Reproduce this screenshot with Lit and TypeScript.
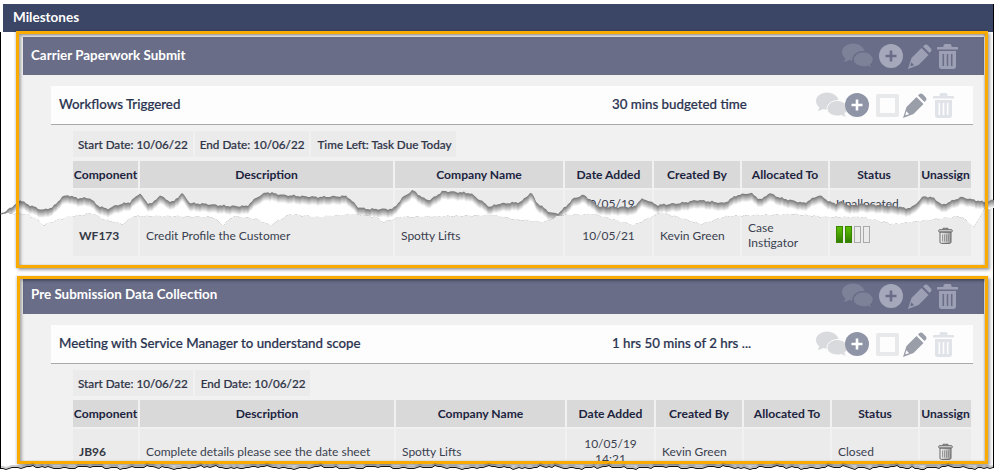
import { LitElement, html, css, svg } from "lit";
import { customElement } from "lit/decorators.js";

const U: number[][] = [
  [0,214],[6,212],[8,208],[13,207],[20,200],[27,204],[37,208],[43,210],[53,207],[62,197],[68,195],[77,198],[90,198],[97,205],[107,209],[117,205],[130,202],[140,193],[147,203],[153,203],[160,195],[167,200],[173,202],[182,193],[190,203],[207,204],[227,206],[247,206],[257,197],[267,192],[283,195],[317,197],[347,196],[358,207],[367,209],[393,209],[403,197],[413,190],[423,198],[430,200],[443,191],[470,193],[483,202],[490,207],[497,204],[507,203],[521,202],[531,192],[537,203],[551,213],[559,213],[574,198],[584,195],[592,201],[600,207],[634,207],[641,199],[647,200],[657,205],[681,203],[697,200],[724,203],[737,195],[751,193],[761,200],[769,193],[781,198],[804,203],[819,195],[827,200],[835,204],[841,201],[850,206],[861,204],[894,206],[905,208],[911,208],[924,196],[934,198],[942,205],[961,197],[984,202],[994,200]
];
const L: number[][] = [
  [0,214],[7,213],[27,214],[37,219],[43,225],[60,219],[73,216],[93,213],[103,219],[123,224],[133,216],[167,216],[213,217],[223,225],[233,216],[257,219],[270,225],[290,214],[317,217],[353,214],[377,217],[383,222],[400,217],[494,215],[514,219],[544,222],[560,215],[594,214],[634,225],[661,212],[701,224],[727,216],[794,214],[827,217],[861,217],[894,224],[961,216],[974,227],[984,209],[994,208]
];

const interp = (pts: number[][], x: number) => {
  for (let i = 1; i < pts.length; i++) {
    if (x <= pts[i][0]) {
      const [a, b] = pts[i - 1];
      const [c, d] = pts[i];
      return b + ((d - b) * (x - a)) / (c - a || 1);
    }
  }
  return pts[pts.length - 1][1];
};
const jitter = (x: number, s: number) => Math.sin(x * 1.7 + s) * 0.5 + Math.sin(x * 0.63 + s * 2) * 0.6;

const tearLayers = () => {
  const xs: number[] = [];
  for (let x = 0; x <= 994; x += 2) xs.push(x);
  const steps = 9;
  const out = [];
  for (let i = 0; i < steps; i++) {
    const t = i / (steps - 1);
    const g = Math.round(125 + (255 - 125) * t);
    const top = xs.map((x) => {
      const l = interp(L, x) + jitter(x, 3);
      const u = interp(U, x) + jitter(x, 1) + i;
      return `${x},${Math.min(u, l).toFixed(1)}`;
    });
    const bot = [...xs].reverse().map((x) => `${x},${(interp(L, x) + jitter(x, 3)).toFixed(1)}`);
    out.push(svg`<polygon points=${[...top, ...bot].join(" ")} fill=${`rgb(${g},${g},${g})`}></polygon>`);
  }
  return out;
};

const bottomEdge = () => {
  const pts: string[] = [];
  for (let x = 0; x <= 994; x += 3) {
    const y = 467.5 + Math.round(Math.sin(x * 0.37) * 0.8 + Math.sin(x * 0.11 + 1) * 0.9 + Math.sin(x * 0.83 + 2) * 0.5);
    pts.push(`${x},${y}`);
  }
  return pts.join(" ");
};

const bubbles = html`<svg class="ic bubbles" width="32" height="26" viewBox="0 0 32 26">
  <path class="b1" d="M11 .5c6 0 11.500 3.700 11.500 8.500s-5.500 8.500-11.500 8.500c-1.500 0-3-.2-4-.6C5.500 18 3.500 18.700 1.500 18.700c1-1 1.500-2 1.800-3.500C1.200 13.700 0 11.500 0 9 0 4.200 5 .5 11 .5z"></path>
  <path class="b2" d="M21 8.500c5.500 0 10.500 3.500 10.500 8 0 2-1 3.900-2.700 5.200.2 1.300.9 2.600 1.900 3.500-1.800 0-3.600-.7-4.900-1.800-1.300.4-2.800.6-4.300.6-5.500 0-10.500-3-10.500-7.500s5-8 10.500-8z"></path>
</svg>`;
const plus = html`<svg class="ic plus" width="24" height="24" viewBox="0 0 24 24">
  <circle class="c" cx="12" cy="12" r="12"></circle>
  <path class="p" d="M10.700 6.500h2.600v4.200h4.200v2.600h-4.200v4.200h-2.600v-4.200H6.500v-2.600h4.200z"></path>
</svg>`;
const pencil = html`<svg class="ic pencil" width="24" height="25" viewBox="0 0 24 25">
  <path fill-rule="evenodd" d="M3.500 14 13.500 4l7 7-10 10L0 25zM3.300 18.300l-1 3.900 3.900-1z"></path>
  <path d="M15 2.500l1.200-1.200c1-1 2.600-1 3.600 0l2.900 2.900c1 1 1 2.600 0 3.600L21.500 9z"></path>
</svg>`;
const trash = html`<svg class="ic trash" width="21" height="25" viewBox="0 0 21 25">
  <path d="M6.500 3V1.800C6.500.8 7.300 0 8.300 0h4.400c1 0 1.800.8 1.800 1.800V3H20c.6 0 1 .4 1 1v1.500H0V4c0-.6.4-1 1-1z"></path>
  <path fill-rule="evenodd" d="M2 7h17v15.500c0 1.400-1.100 2.500-2.500 2.500h-12C3.100 25 2 23.900 2 22.500zM5.500 10v12h1.600V10zM9.700 10v12h1.600V10zM13.900 10v12h1.600V10z"></path>
</svg>`;
const rowTrash = html`<svg width="15" height="17" viewBox="0 0 15 17">
  <defs><linearGradient id="tg" x1="0" y1="0" x2="1" y2="0"><stop offset="0" stop-color="#f4f4f4"></stop><stop offset="1" stop-color="#9a9a9a"></stop></linearGradient></defs>
  <path d="M5 2.500V1.300h5v1.200" fill="none" stroke="#666"></path>
  <rect x=".7" y="2.700" width="13.600" height="2.300" rx="1" fill="#ddd" stroke="#666"></rect>
  <path d="M2 5.200h11v9.800c0 .8-.6 1.400-1.400 1.400H3.400C2.600 16.400 2 15.800 2 15z" fill="url(#tg)" stroke="#666"></path>
  <path d="M4.500 7.500v7M6.500 7.500v7M8.500 7.500v7M10.500 7.500v7" stroke="#888" stroke-width=".8"></path>
</svg>`;

type Row = { h: string; cells: unknown[] };
type Section = {
  cls: string;
  title: string;
  task: string;
  time: string;
  chips: string[];
  cols: number[];
  rows: Row[];
};

const progress = html`<div class="prog"><i class="on"></i><i class="on"></i><i></i><i></i></div>`;
const HEAD = ["Component", "Description", "Company Name", "Date Added", "Created By", "Allocated To", "Status", "Unassign"];

const SECTIONS: Section[] = [
  {
    cls: "one",
    title: "Carrier Paperwork Submit",
    task: "Workflows Triggered",
    time: "30 mins budgeted time",
    chips: ["Start Date: 10/06/22", "End Date: 10/06/22", "Time Left: Task Due Today"],
    cols: [65, 253, 168, 87, 86, 86, 88, 51],
    rows: [
      { h: "cut", cells: ["", "", "", "10/05/19", "", "", "Unallocated", ""] },
      { h: "r42", cells: ["WF173", "Credit Profile the Customer", "Spotty Lifts", "10/05/21", "Kevin Green", html`Case<br />Instigator`, progress, rowTrash] },
    ],
  },
  {
    cls: "two",
    title: "Pre Submission Data Collection",
    task: "Meeting with Service Manager to understand scope",
    time: "1 hrs 50 mins of 2 hrs ...",
    chips: ["Start Date: 10/06/22", "End Date: 10/06/22"],
    cols: [65, 254, 169, 87, 86, 86, 86, 51],
    rows: [
      { h: "r44", cells: ["JB96", "Complete details please see the date sheet", "Spotty Lifts", html`10/05/19<br />14:21`, "Kevin Green", "", "Closed", rowTrash] },
    ],
  },
];

@customElement("app-root")
export class AppRoot extends LitElement {
  static styles = css`
    :host {
      display: block;
      position: relative;
      width: 994px;
      height: 474px;
      overflow: hidden;
      background: #fff;
      font-family: "Lato", "Liberation Sans", sans-serif;
      color: #3a3f4f;
      font-size: 12px;
    }
    .page {
      display: flex;
      flex-direction: column;
      padding: 4px 1px 0 3px;
    }
    .top {
      height: 28px;
      background: #3b4565;
      color: #fff;
      font-size: 13.500px;
      font-weight: 700;
      line-height: 27px;
      padding-left: 10px;
    }
    .sec {
      position: relative;
      background: #f1f1f1;
      box-sizing: border-box;
      box-shadow: 2px 2px 3px rgba(0, 0, 0, 0.35), -1px 0 2px rgba(0, 0, 0, 0.15);
    }
    .sec.one {
      margin: -1px 5px 0 13px;
      height: 237px;
      padding: 6px 4px 0 7px;
    }
    .sec.two {
      margin: 8px 5px 0 14px;
      height: 188px;
      padding: 3px 4px 0 6px;
      overflow: hidden;
    }
    .annot {
      position: absolute;
      inset: 0;
      border: 3px solid #f9ab00;
      box-shadow: inset 2px 2px 3px rgba(0, 0, 0, 0.3), inset -1px 0 2px rgba(0, 0, 0, 0.2);
      z-index: 3;
      pointer-events: none;
    }
    .head {
      display: flex;
      align-items: center;
      background: #696d88;
      color: #fff;
      font-weight: 700;
      font-size: 13.400px;
      padding: 0 26px 0 8px;
    }
    .one .head { height: 38px; }
    .two .head { height: 35px; }
    .head .t { flex: 1; margin-bottom: 3px; }
    .two .head .t { margin-bottom: 5px; }
    .head .icons { display: flex; align-items: center; gap: 5px; }
    .two .head .icons { margin-top: -1px; }
    .head .b1 { fill: #7e8299; }
    .head .b2 { fill: #7e8299; stroke: #696d88; stroke-width: 1.500; }
    .head .c { fill: #a5a8ba; }
    .head .p { fill: #696d88; }
    .head .pencil, .head .trash { fill: #9da0b4; }
    .body { padding: 11px 11px 0 28px; }
    .task {
      display: grid;
      grid-template-columns: 553px 1fr auto;
      align-items: center;
      height: 38px;
      background: #fdfdfd;
      border-bottom: 1px solid #a9a9a9;
      padding: 0 19px 0 8px;
      color: #2a3350;
      font-size: 13.300px;
      font-weight: 500;
      -webkit-text-stroke: 0.2px #2a3350;
    }
    .task > span:not(.icons) { margin-bottom: 3px; }
    .task .icons { display: flex; align-items: center; }
    .task .b1, .task .b2 { fill: #d9dadd; }
    .task .b2 { stroke: #fdfdfd; stroke-width: 1; }
    .task .c { fill: #8f94a6; }
    .task .p { fill: #fff; }
    .task .plus { margin-left: -3px; position: relative; }
    .task .box {
      box-sizing: border-box;
      width: 23px;
      height: 23px;
      border: 4px solid #e8e9eb;
      border-radius: 2px;
      margin: 0 4px 0 7px;
    }
    .task .pencil { fill: #9a9ea9; }
    .task .trash { fill: #e0e3e8; margin-left: 6px; }
    .inner { padding: 6px 2px 0 22px; }
    .chips { display: flex; gap: 2px; margin-bottom: 4px; }
    .chip {
      height: 26px;
      line-height: 26px;
      padding: 0 5px;
      background: #ebebeb;
      color: #2f3448;
      font-weight: 500;
      font-size: 11.700px;
      -webkit-text-stroke: 0.2px #2f3448;
    }
    .chip:last-child { padding: 0 5px 0 6px; }
    .grid { display: grid; gap: 2px; }
    .th {
      height: 27px;
      line-height: 27px;
      background: #d9d9d9;
      color: #1c2440;
      font-weight: 700;
      font-size: 12.100px;
      text-align: center;
      white-space: nowrap;
    }
    .td {
      display: flex;
      align-items: center;
      background: #ebebeb;
      padding: 0 6px;
      line-height: 15px;
      white-space: nowrap;
      overflow: hidden;
      font-size: 12px;
    }
    .td.cut { height: 22px; align-items: flex-start; padding-top: 6px; box-sizing: border-box; }
    .td.r42 { height: 42px; }
    .td.r44 { height: 44px; }
    .td.c0 { font-weight: 700; font-size: 12px; color: #333845; }
    .td.c3 { justify-content: center; text-align: center; }
    .td.c7 { justify-content: center; padding: 0; }
    .prog { display: flex; gap: 2px; margin-top: -1px; }
    .prog i {
      display: block;
      box-sizing: border-box;
      width: 7px;
      height: 17px;
      border: 1px solid #aaa;
    }
    .prog i.on {
      border-color: #3b8400;
      background: linear-gradient(#5cbf00, #327f00);
    }
    .tear {
      position: absolute;
      left: 0;
      top: 0;
      z-index: 2;
      pointer-events: none;
    }
    .edge {
      position: absolute;
      background: #000;
      width: 1px;
      z-index: 1;
    }
    .edge.l { left: 0; top: 32px; height: 436px; }
    .edge.r { left: 993px; top: 4px; height: 464px; }
    .bottom {
      position: absolute;
      left: 0;
      top: 0;
      z-index: 4;
      pointer-events: none;
    }
  `;

  private cellsFor(sec: Section) {
    const cols = sec.cols.map((c) => `${c}px`).join(" ");
    return html`<div class="grid" style="grid-template-columns:${cols}">
      ${HEAD.map((h) => html`<div class="th">${h}</div>`)}
      ${sec.rows.map((r) =>
        r.cells.map((c, i) => html`<div class="td ${r.h} c${i}">${c}</div>`)
      )}
    </div>`;
  }

  private section(sec: Section) {
    return html`<section class="sec ${sec.cls}">
      <div class="head">
        <span class="t">${sec.title}</span>
        <span class="icons">${bubbles}${plus}${pencil}${trash}</span>
      </div>
      <div class="body">
        <div class="task">
          <span>${sec.task}</span>
          <span>${sec.time}</span>
          <span class="icons">${bubbles}${plus}<span class="box"></span>${pencil}${trash}</span>
        </div>
        <div class="inner">
          <div class="chips">${sec.chips.map((c) => html`<div class="chip">${c}</div>`)}</div>
          ${this.cellsFor(sec)}
        </div>
      </div>
      <div class="annot"></div>
    </section>`;
  }

  render() {
    return html`
      <div class="page">
        <div class="top">Milestones</div>
        ${SECTIONS.map((s) => this.section(s))}
      </div>
      <div class="edge l"></div>
      <div class="edge r"></div>
      <svg class="tear" width="994" height="474" viewBox="0 0 994 474">${tearLayers()}</svg>
      <svg class="bottom" width="994" height="474" viewBox="0 0 994 474">
        <polygon points="0,468 ${bottomEdge()} 994,474 0,474" fill="#fff"></polygon>
        <polyline points=${bottomEdge()} transform="translate(0 -1.500)" fill="none" stroke="rgba(0,0,0,.2)" stroke-width="2"></polyline>
        <polyline points=${bottomEdge()} fill="none" stroke="#111" stroke-width="1"></polyline>
      </svg>
    `;
  }
}
